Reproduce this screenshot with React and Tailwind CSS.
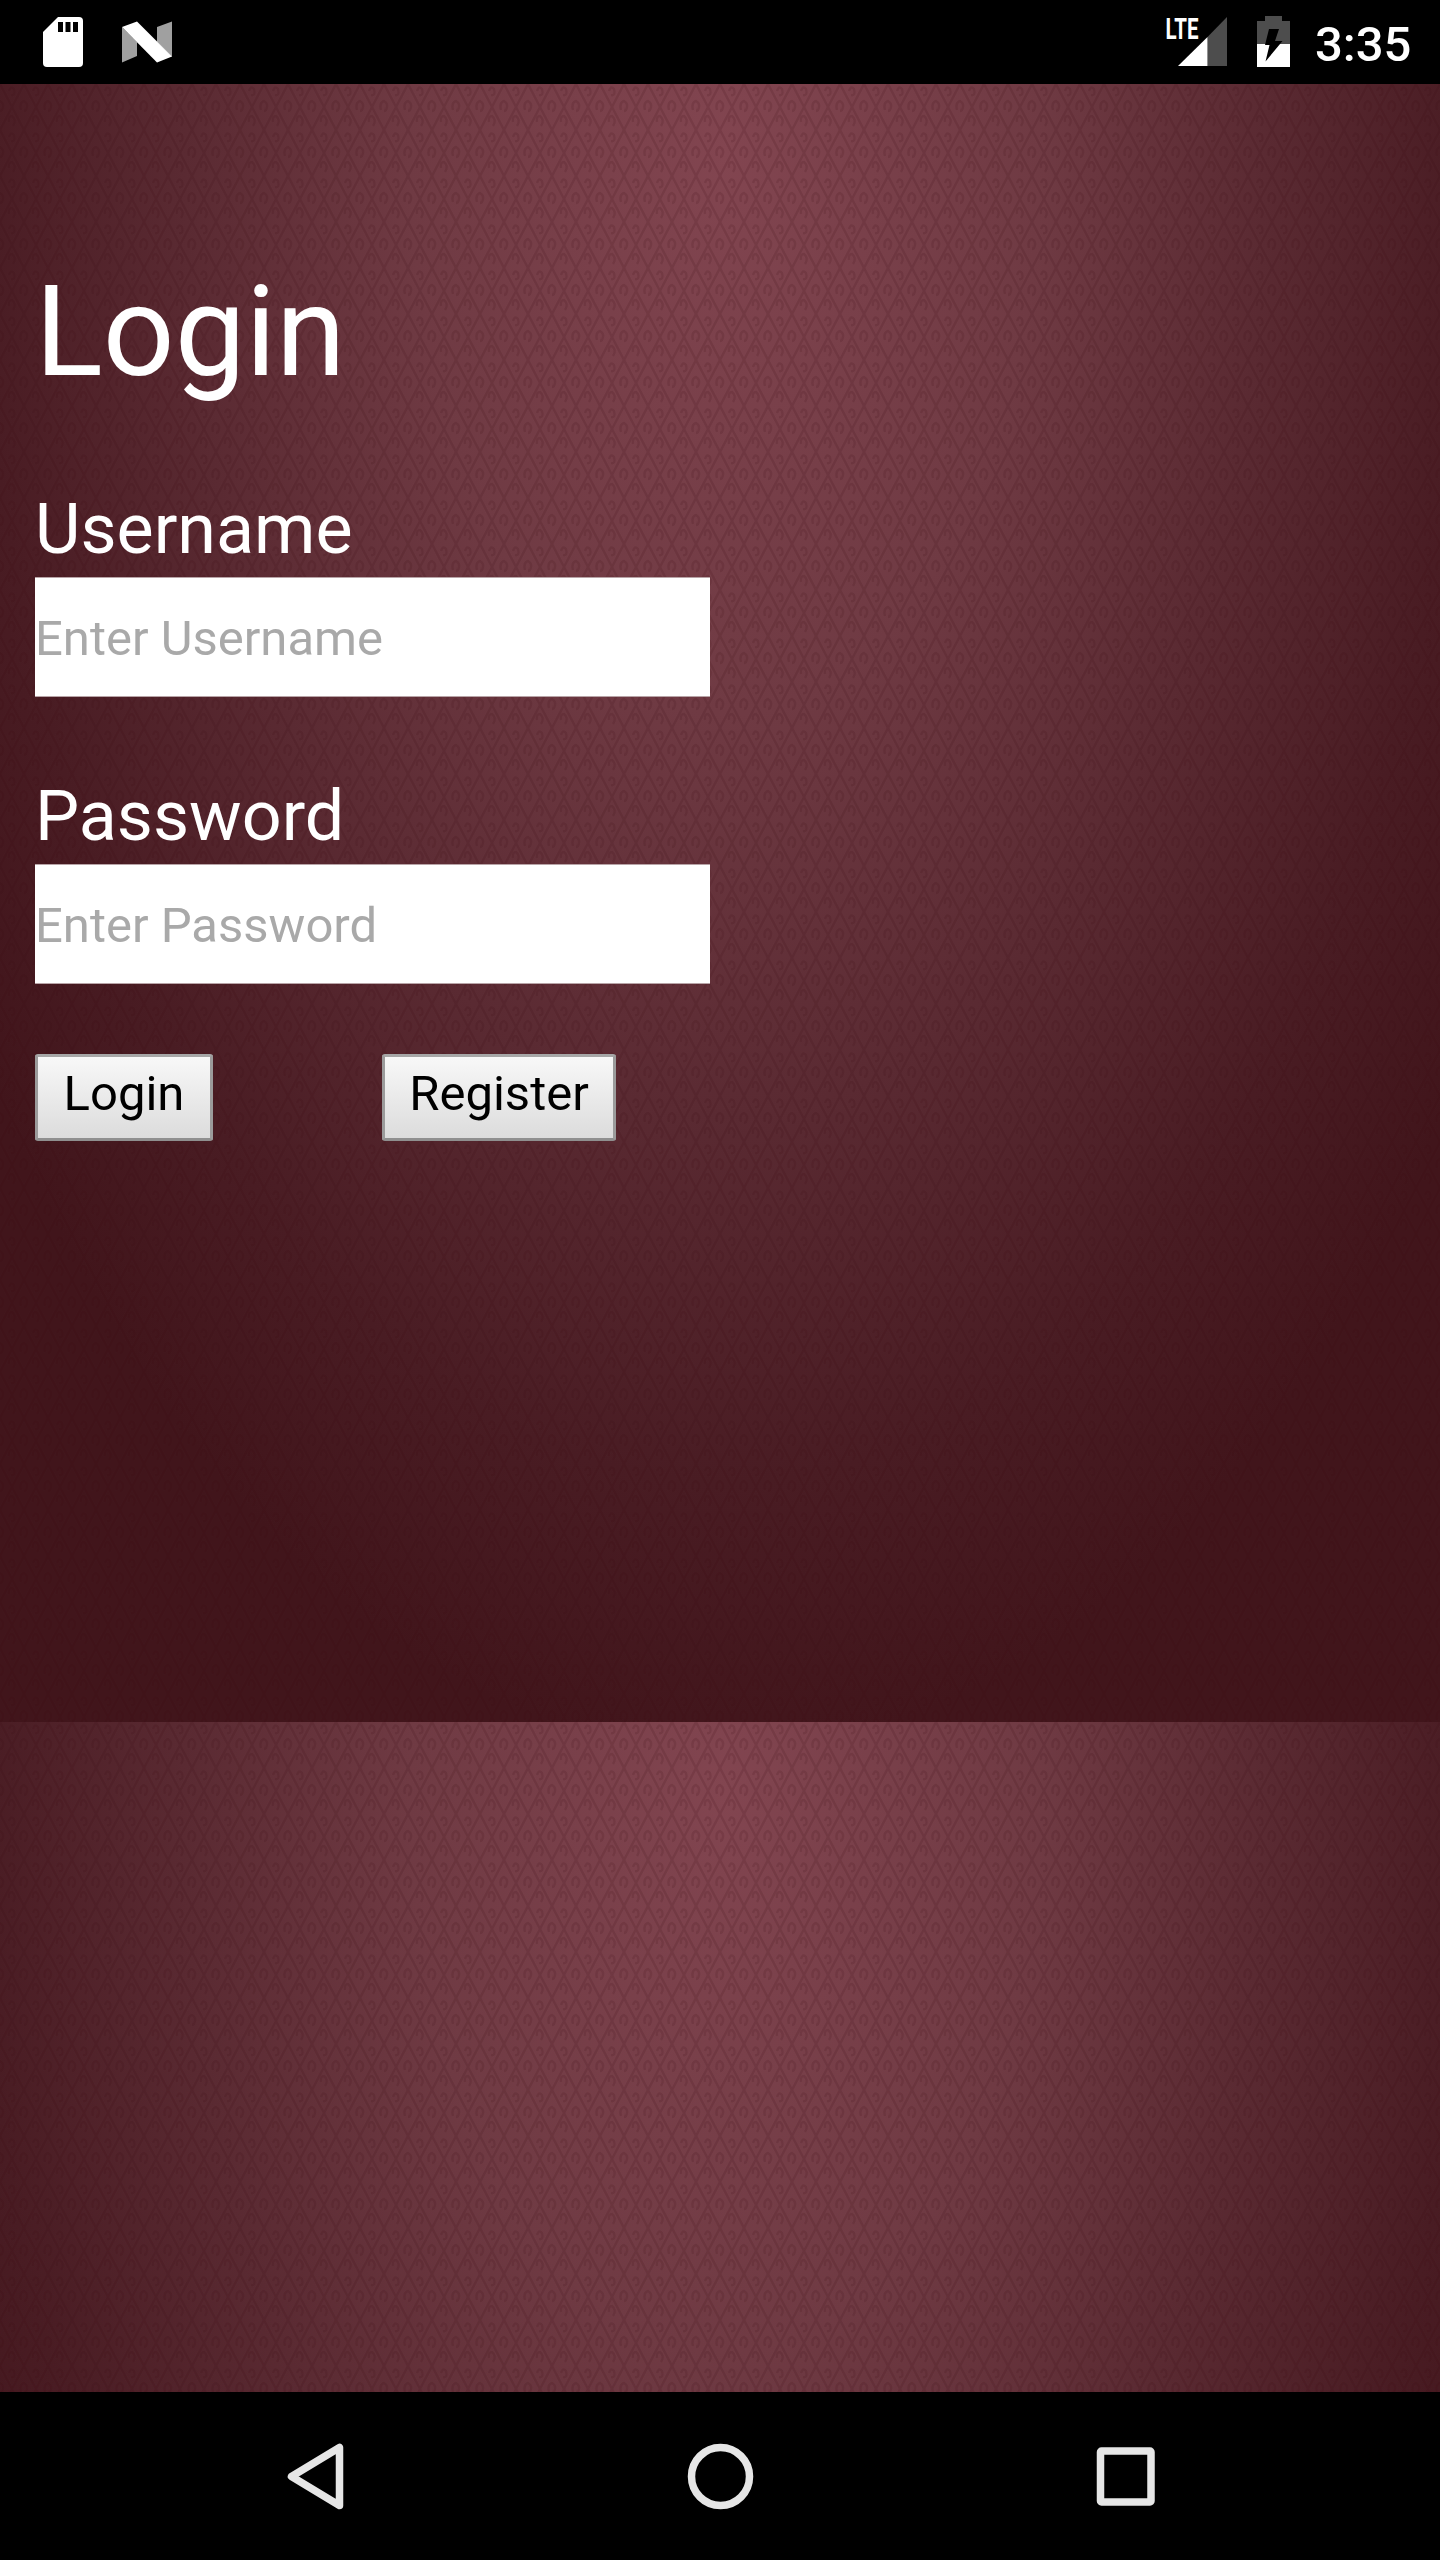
import React from "react";

function StatusBar() {
  return (
    <header className="flex h-[84px] items-start bg-black text-white">
      <svg width="200" height="84" className="shrink-0">
        <path d="M58 17H79Q83 17 83 21V63Q83 67 79 67H47Q43 67 43 63V32Z" fill="#fff" />
        <path d="M58 22h5v10h-5zM65.500 22h5v10h-5zM73 22h5v10h-5z" fill="#000" />
        <path d="M122 27L137 42V56L122 62.500ZM157 27L172 21.500V57L157 42Z" fill="#a0a0a0" />
        <path d="M122 27L137 21.500L172 56.500L157 62.500Z" fill="#fff" />
      </svg>
      <div className="grow" />
      <svg width="140" height="84" className="shrink-0">
        <text x="1.500" y="39" fontSize="30" fontWeight="700" fontFamily="Roboto, sans-serif" fill="#fff" textLength="33" lengthAdjust="spacingAndGlyphs">LTE</text>
        <path d="M63 17V66H43.500V37Z" fill="#4d4d4d" />
        <path d="M43.500 37V66H14Z" fill="#fff" />
        <path d="M101 16h17v5h8v23H93V21h8Z" fill="#4d4d4d" />
        <path d="M93 44h33v23H93z" fill="#fff" />
        <path d="M105 29h10l-4 12h7.500L101.500 61.500L105.500 45H101Z" fill="#000" />
      </svg>
      <time className="mt-[12px] ml-[11px] w-[125px] font-medium text-[49px] leading-[66px]">3:35</time>
    </header>
  );
}

function Backdrop() {
  return (
    <svg className="absolute inset-0" width="1440" height="2309" aria-hidden="true">
      <defs>
        <radialGradient id="glow" gradientUnits="userSpaceOnUse" cx="0" cy="0" r="1" gradientTransform="translate(725 70) scale(900 1600)">
          <stop offset="0" stopColor="#824550" />
          <stop offset="0.35" stopColor="#6f3a43" />
          <stop offset="0.6" stopColor="#5a2a32" />
          <stop offset="0.83" stopColor="#491c23" />
          <stop offset="1" stopColor="#41151b" />
        </radialGradient>
        <pattern id="weave" width="24" height="46" patternUnits="userSpaceOnUse">
          <g fill="none" stroke="#3c0410" strokeOpacity="0.14" strokeWidth="2.500">
            <path d="M-1 -2L12 23L25 48M25 -2L12 23L-1 48" />
            <path d="M9 7Q11 1 14 5Q16 12 11 11M9 38Q8 32 12 32Q17 36 13 42" />
            <path d="M-3 26Q-5 19 0 17Q5 20 2 26Q-1 29 -1 23M21 26Q19 19 24 17Q29 20 26 26" />
          </g>
        </pattern>
      </defs>
      <g id="panel">
        <rect width="1440" height="1638" fill="url(#glow)" />
        <rect width="1440" height="1638" fill="url(#weave)" />
      </g>
      <use href="#panel" y="1638" />
    </svg>
  );
}

function Field({ label, type, placeholder }) {
  return (
    <label className="flex flex-col gap-[7px]">
      <span className="text-[70px] leading-[82px] text-white">{label}</span>
      <input
        type={type}
        placeholder={placeholder}
        className="block h-[120px] w-[675px] border-y border-[#b8a4a7] bg-white pt-[3px] text-[49px] text-black placeholder:text-[#a9a9a9]"
      />
    </label>
  );
}

function FormButton({ children, className }) {
  return (
    <button
      className={
        "h-[87px] rounded-[3px] border-[3px] border-t-[#a6a6a6] border-x-[#9b9b9b] border-b-[#8f8f8f] bg-linear-to-b from-[#f8f8f8] to-[#dcdcdc] pb-[9px] text-[49px] leading-[55px] text-black " +
        className
      }
    >
      {children}
    </button>
  );
}

function NavBar() {
  return (
    <nav className="flex h-[168px] items-center justify-center bg-black">
      <svg width="1440" height="168" fill="none" stroke="#e6e6e6" strokeWidth="7.500" strokeLinejoin="round">
        <path d="M339.500 55.500V113.500L291.500 84.500Z" />
        <circle cx="720.500" cy="84.500" r="29" />
        <rect x="1100.500" y="59" width="50.500" height="51" rx="1" />
      </svg>
    </nav>
  );
}

export default function App() {
  return (
    <div className="flex h-[2560px] w-[1440px] flex-col overflow-hidden bg-black font-['Roboto',sans-serif]">
      <StatusBar />
      <main className="relative h-[2308px] overflow-hidden">
        <Backdrop />
        <form className="relative flex flex-col pt-[174px] pl-[35px]" onSubmit={(e) => e.preventDefault()}>
          <h1 className="mb-[82px] text-[126px] leading-[148px] text-white">Login</h1>
          <div className="flex flex-col gap-[78px]">
            <Field label="Username" type="text" placeholder="Enter Username" />
            <Field label="Password" type="password" placeholder="Enter Password" />
          </div>
          <div className="mt-[70px] flex gap-[169px]">
            <FormButton className="w-[178px]">Login</FormButton>
            <FormButton className="w-[234px]">Register</FormButton>
          </div>
        </form>
      </main>
      <NavBar />
    </div>
  );
}
